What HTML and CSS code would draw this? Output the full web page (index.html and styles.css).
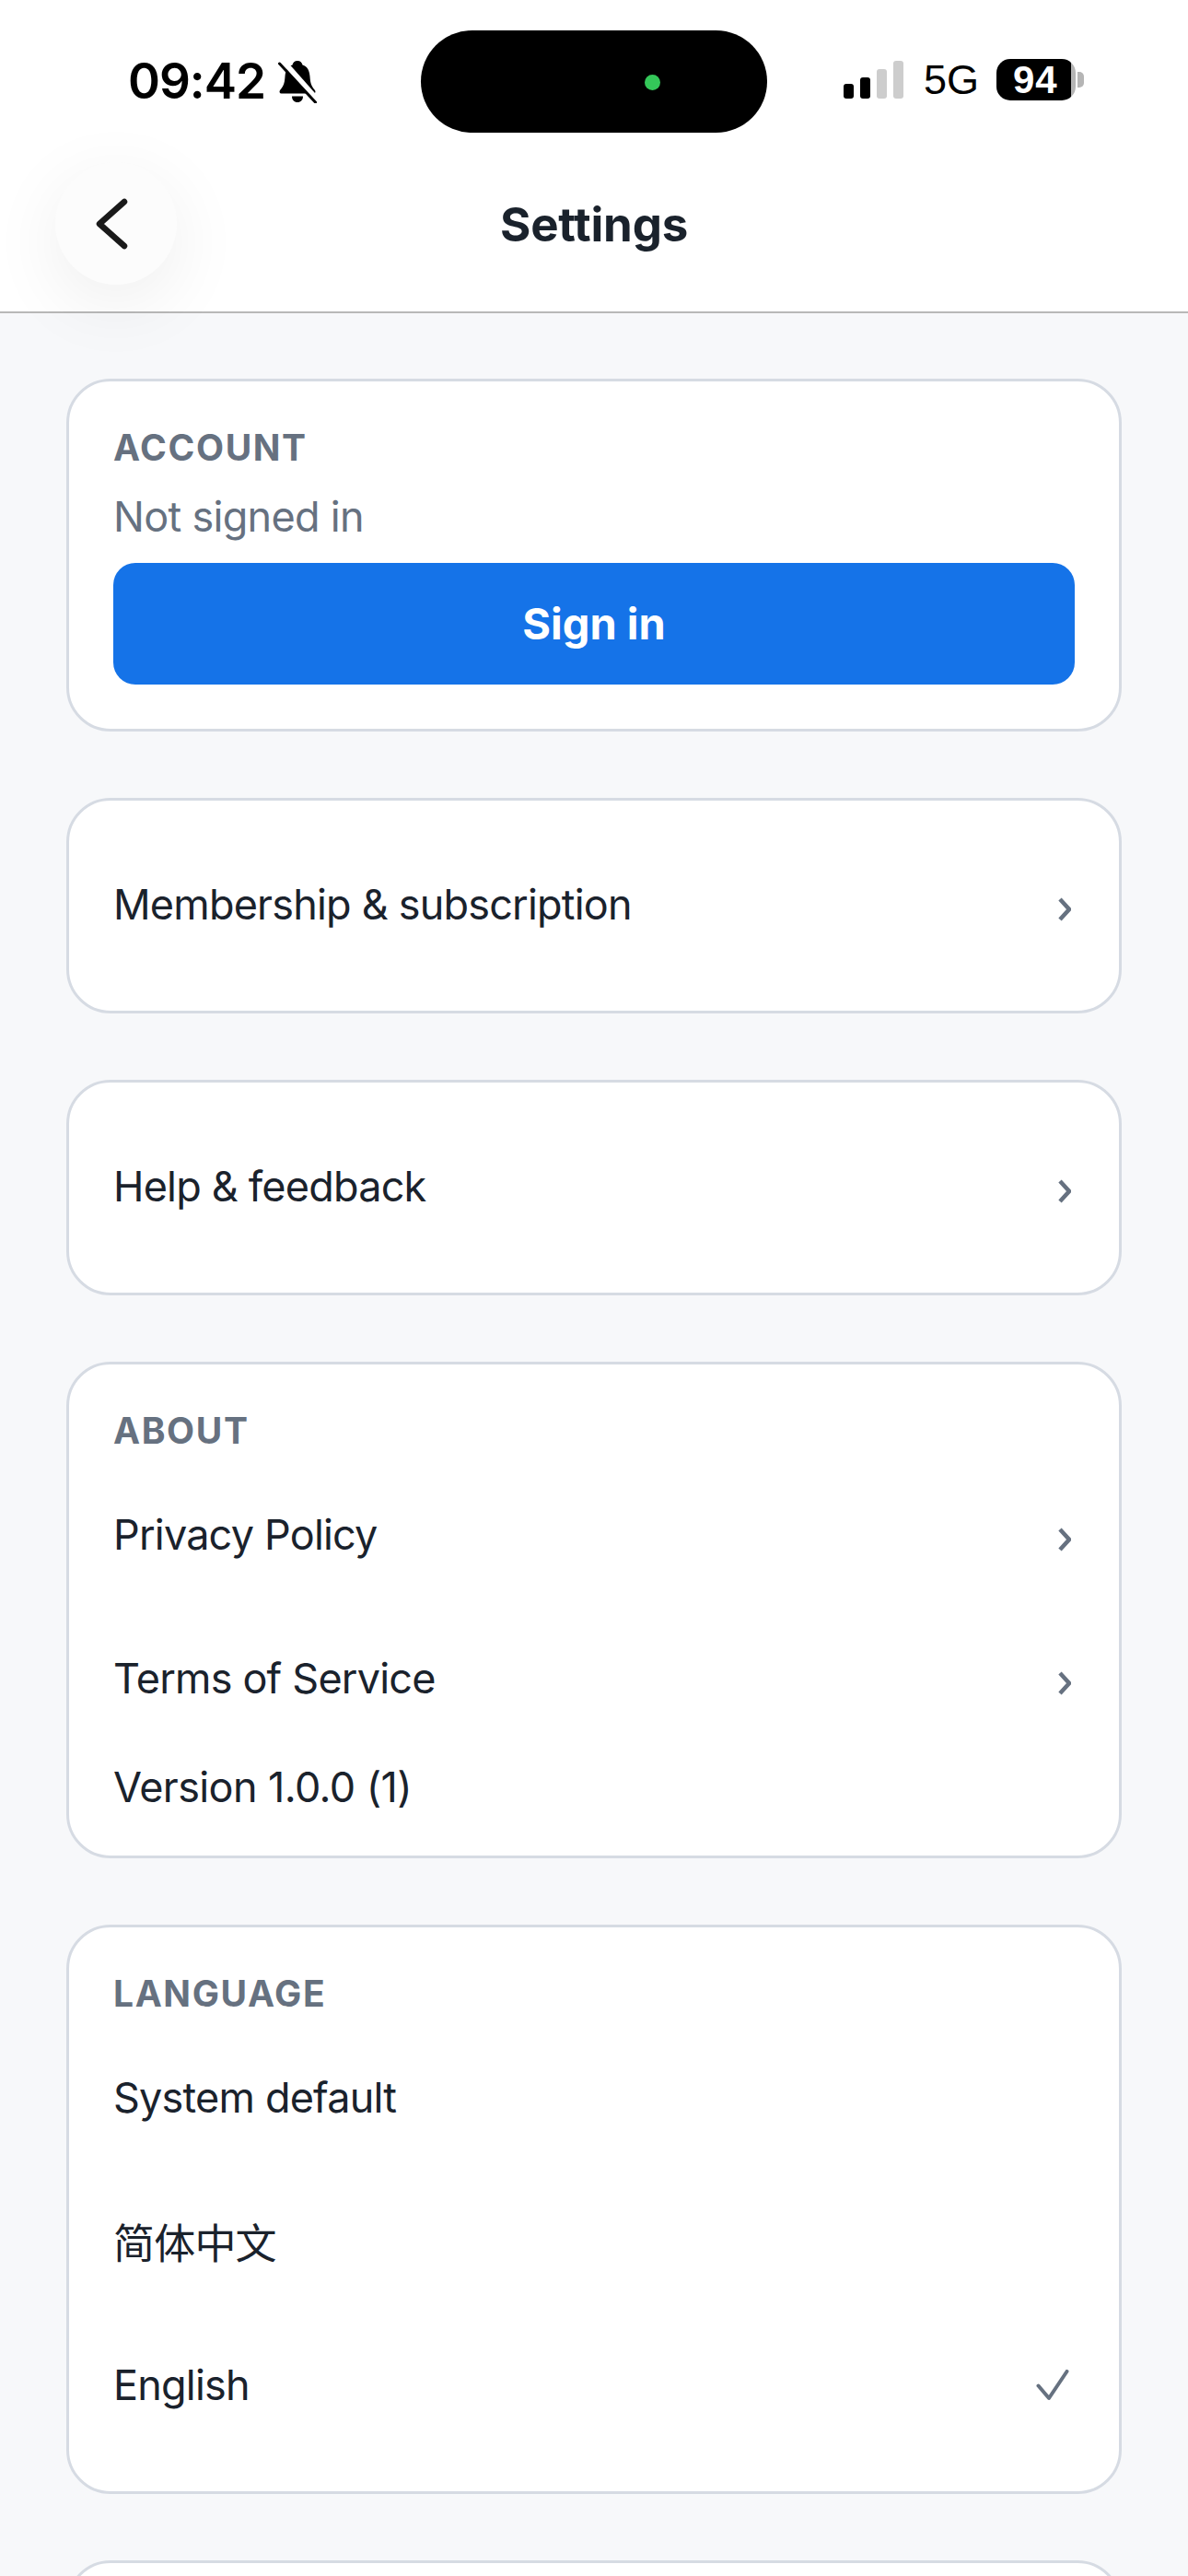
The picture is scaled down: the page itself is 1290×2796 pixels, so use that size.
FILE: index.html
```html
<!DOCTYPE html>
<html lang="en">
<head>
<meta charset="utf-8">
<title>Settings</title>
<link rel="stylesheet" href="styles.css">
</head>
<body>
<header class="header">
  <div class="status">
    <div class="status-left">
      <span class="time">09:42</span>
      <svg class="bell" viewBox="0 0 42 46" width="42" height="46">
        <path d="M21 0c3 0 5 2 5.500 4.500C32 6 34 11 34.500 17c.5 8 2 11 5.500 15 1 1.500.5 3.500-1.500 3.500H3.500c-2 0-2.500-2-1.500-3.500 3.500-4 5-7 5.500-15C8 11 10 6 15.500 4.500 16 2 18 0 21 0z" fill="#000"/>
        <path d="M15 38.500h12c0 4-2.500 6.500-6 6.500s-6-2.500-6-6.500z" fill="#000"/>
        <path d="M5 0 44 44" stroke="#fff" stroke-width="6"/>
        <path d="M1.500 3 40.500 45" stroke="#000" stroke-width="3" stroke-linecap="round"/>
      </svg>
    </div>
    <div class="island"><span class="island-dot"></span></div>
    <div class="status-right">
      <div class="signal">
        <span class="bar bar-1"></span>
        <span class="bar bar-2"></span>
        <span class="bar bar-3"></span>
        <span class="bar bar-4"></span>
      </div>
      <span class="net">5G</span>
      <div class="battery">
        <span class="battery-body">94</span>
        <span class="battery-nub"></span>
      </div>
    </div>
  </div>
  <nav class="nav">
    <button class="back" aria-label="Back">
      <svg viewBox="0 0 132 132" width="132" height="132"><path d="M75 43 48 67 75 91" transform="translate(0 -1)" fill="none" stroke="#1a1a1a" stroke-width="6.500" stroke-linecap="round" stroke-linejoin="round"/></svg>
    </button>
    <h1 class="title">Settings</h1>
  </nav>
</header>
<main class="main">
  <section class="card">
    <h2 class="label">ACCOUNT</h2>
    <p class="muted">Not signed in</p>
    <button class="primary">Sign in</button>
  </section>
  <section class="card">
    <div class="row"><span>Membership &amp; subscription</span><svg class="chev" viewBox="0 0 14 26" width="14" height="26"><path d="M2 2 12 13 2 24" fill="none" stroke="#667180" stroke-width="4.500"/></svg></div>
  </section>
  <section class="card">
    <div class="row"><span>Help &amp; feedback</span><svg class="chev" viewBox="0 0 14 26" width="14" height="26"><path d="M2 2 12 13 2 24" fill="none" stroke="#667180" stroke-width="4.500"/></svg></div>
  </section>
  <section class="card stack">
    <h2 class="label">ABOUT</h2>
    <div class="row"><span>Privacy Policy</span><svg class="chev" viewBox="0 0 14 26" width="14" height="26"><path d="M2 2 12 13 2 24" fill="none" stroke="#667180" stroke-width="4.500"/></svg></div>
    <div class="row"><span>Terms of Service</span><svg class="chev" viewBox="0 0 14 26" width="14" height="26"><path d="M2 2 12 13 2 24" fill="none" stroke="#667180" stroke-width="4.500"/></svg></div>
    <div class="version">Version 1.0.0 (1)</div>
  </section>
  <section class="card stack">
    <h2 class="label">LANGUAGE</h2>
    <div class="row"><span>System default</span></div>
    <div class="row"><span>简体中文</span></div>
    <div class="row"><span>English</span><svg class="check" viewBox="0 0 36 36" width="36" height="36"><path d="M2.500 17.500 14 31 33.500 2" fill="none" stroke="#667180" stroke-width="4" stroke-linecap="round" stroke-linejoin="round"/></svg></div>
  </section>
  <section class="card card-last"></section>
</main>
</body>
</html>
```

FILE: styles.css
```css
* { box-sizing: border-box; }
html, body { margin: 0; padding: 0; }
body {
  width: 1290px;
  height: 2796px;
  overflow: hidden;
  background: #f7f8fa;
  font-family: Inter, "Noto Sans CJK SC", sans-serif;
  color: #1a222c;
}
.header {
  background: #fff;
  border-bottom: 2px solid #b8b8b8;
  height: 340px;
  position: relative;
  z-index: 1;
}
.status {
  position: relative;
  height: 176px;
  padding: 0 113px 0 139px;
  display: flex;
  justify-content: space-between;
  align-items: flex-start;
  color: #000;
  font-family: Inter, sans-serif;
}
.status-left {
  display: flex;
  align-items: center;
  gap: 14px;
  padding-top: 59px;
}
.time { font-size: 53px; line-height: 58px; font-weight: 600; letter-spacing: -1px; }
.bell { display: block; margin-top: 2px; }
.island {
  position: absolute;
  left: 457px;
  top: 33px;
  width: 376px;
  height: 111px;
  border-radius: 56px;
  background: #000;
}
.island-dot {
  position: absolute;
  left: 243px;
  top: 48px;
  width: 17px;
  height: 17px;
  border-radius: 50%;
  background: #34c759;
}
.status-right {
  display: flex;
  align-items: flex-start;
  padding-top: 64px;
}
.signal {
  display: flex;
  align-items: flex-end;
  gap: 7px;
  height: 43px;
  margin-right: 22px;
}
.bar { width: 11px; border-radius: 3px; background: #000; }
.bar-1 { height: 16px; }
.bar-2 { height: 23px; }
.bar-3 { height: 32px; background: #cdcdcd; }
.bar-4 { height: 41px; background: #cdcdcd; }
.net { font-family: "Liberation Sans", sans-serif; font-size: 45px; line-height: 44px; margin-top: 1px; margin-right: 22px; width: 57px; }
.battery { display: flex; align-items: center; height: 45px; }
.battery-body {
  width: 86px;
  height: 45px;
  border-radius: 15px;
  background: linear-gradient(90deg, #000 94%, #b5b5b5 94%);
  color: #fff;
  font-family: "Liberation Sans", sans-serif;
  font-size: 42px;
  font-weight: 700;
  line-height: 45px;
  padding-left: 18px;
  letter-spacing: 1px;
}
.battery-nub { width: 7px; height: 17px; margin-left: 2px; border-radius: 0 5px 5px 0; background: #b5b5b5; }
.nav {
  position: relative;
  height: 133px;
  display: flex;
  justify-content: center;
  align-items: center;
}
.back {
  position: absolute;
  left: 60px;
  top: 0;
  width: 132px;
  height: 133px;
  padding: 0;
  border: 0;
  border-radius: 50%;
  background: #fcfcfc;
  box-shadow: 0 20px 80px rgba(0, 0, 0, 0.07);
}
.back svg { display: block; }
.title { margin: 0; padding-top: 2px; font-size: 51px; line-height: 60px; font-weight: 700; letter-spacing: -0.2px; color: #1a222c; }
.main {
  padding: 71px 72px 0 72px;
  display: flex;
  flex-direction: column;
  gap: 72px;
}
.card {
  background: #fff;
  border: 3px solid #d6dbe3;
  border-radius: 48px;
  padding: 48px;
  display: flex;
  flex-direction: column;
}
.stack { gap: 24px; }
.label {
  margin: 0;
  font-size: 39px;
  line-height: 48px;
  font-weight: 700;
  letter-spacing: 1.6px;
  color: #667180;
}
.muted { margin: 0; font-size: 45px; line-height: 54px; letter-spacing: -0.7px; color: #667180; margin-top: 24px; }
.primary {
  margin-top: 23px;
  height: 132px;
  padding: 0 0 2px;
  border: 0;
  border-radius: 24px;
  background: #1573e8;
  color: #fff;
  font-family: inherit;
  font-size: 47px;
  font-weight: 700;
}
.row {
  height: 132px;
  display: flex;
  justify-content: space-between;
  align-items: center;
  font-size: 45px;
  letter-spacing: -0.8px;
  color: #1a222c;
  padding-right: 4px;
}
.row span { padding-bottom: 4px; }
.version { font-size: 45px; line-height: 53px; letter-spacing: -0.6px; color: #1a222c; }
.chev { display: block; margin-top: 8px; }
.check { display: block; margin-right: 2px; }
.card-last { height: 300px; }
```
